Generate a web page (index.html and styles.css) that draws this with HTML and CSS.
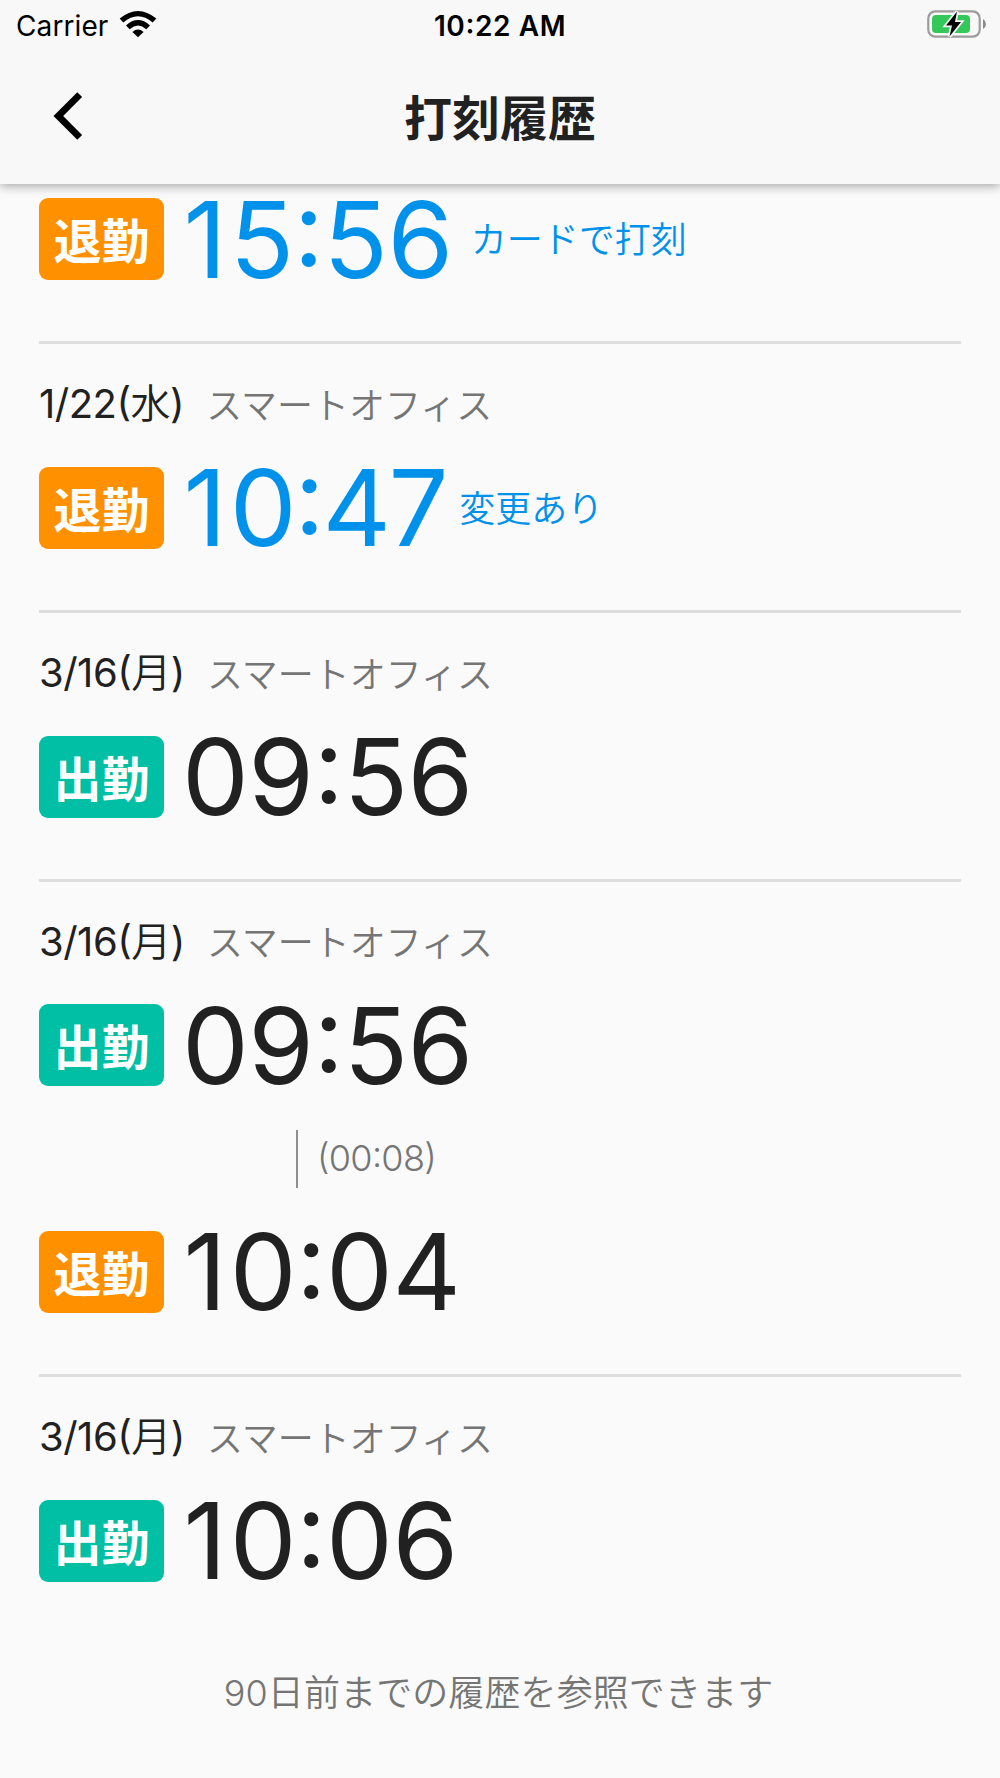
FILE: index.html
```html
<!DOCTYPE html>
<html lang="ja">
<head>
    <meta charset="UTF-8">
    <meta name="viewport" content="width=device-width, initial-scale=1.0">
    <title>打刻履歴</title>
    <link rel="stylesheet" href="styles.css">
</head>
<body>

<header class="header">
    <div class="status-bar">
        <div class="carrier">
            <span class="carrier-name">Carrier</span>
            <svg class="wifi" width="38" height="28" viewBox="0 0 38 28">
                <path d="M0.7 8.6 Q19 -6.600 37.300 8.600 L33.700 12.400 Q19 0 4.300 12.400 Z"/>
                <path d="M7 15.400 Q19 4.800 31 15.400 L27.300 19.200 Q19 12 10.700 19.200 Z"/>
                <path d="M13.400 21.900 Q19 17 24.600 21.900 L19 27.300 Z"/>
            </svg>
        </div>
        <span class="clock">10:22 AM</span>
        <svg class="battery" width="60" height="30" viewBox="0 0 60 30">
            <rect x="1.300" y="2.300" width="51.400" height="25.400" rx="7" fill="none" stroke="#9c9c9c" stroke-width="2.200"/>
            <rect x="5" y="6" width="38" height="18" rx="4" fill="#34c759"/>
            <path d="M56 10 Q59 12 59 15 Q59 18 56 20 Z" fill="#8a8a8a"/>
            <path class="bolt" d="M30 2.500 L19 16.500 H25 L22.500 27.500 L34 13 H28 Z"/>
        </svg>
    </div>
    <div class="nav-bar">
        <svg class="back" width="32" height="48" viewBox="0 0 32 48">
            <path d="M27.700 2.700 L6.300 24 L27.700 45.300"/>
        </svg>
        <h1>打刻履歴</h1>
    </div>
</header>

<main class="history">
    <section class="entry entry-first">
        <div class="punch changed">
            <span class="badge out">退勤</span>
            <span class="time"><span class="one">1</span>5:56</span>
            <span class="note note-card">カードで打刻</span>
        </div>
    </section>

    <section class="entry">
        <div class="info"><span class="date">1/22(<span class="day">水</span>)</span><span class="place">スマートオフィス</span></div>
        <div class="punch changed">
            <span class="badge out">退勤</span>
            <span class="time tight"><span class="one">1</span>0:47</span>
            <span class="note">変更あり</span>
        </div>
    </section>

    <section class="entry">
        <div class="info"><span class="date">3/16(<span class="day">月</span>)</span><span class="place">スマートオフィス</span></div>
        <div class="punch">
            <span class="badge in">出勤</span>
            <span class="time">09:56</span>
        </div>
    </section>

    <section class="entry">
        <div class="info"><span class="date">3/16(<span class="day">月</span>)</span><span class="place">スマートオフィス</span></div>
        <div class="punch">
            <span class="badge in">出勤</span>
            <span class="time">09:56</span>
        </div>
        <div class="duration">(00:08)</div>
        <div class="punch">
            <span class="badge out">退勤</span>
            <span class="time"><span class="one">1</span>0:04</span>
        </div>
    </section>

    <section class="entry">
        <div class="info"><span class="date">3/16(<span class="day">月</span>)</span><span class="place">スマートオフィス</span></div>
        <div class="punch">
            <span class="badge in">出勤</span>
            <span class="time"><span class="one">1</span>0:06</span>
        </div>
    </section>

    <p class="footer-note">90日前までの履歴を参照できます</p>
</main>

</body>
</html>
```
FILE: styles.css
```css
* {
    box-sizing: border-box;
}

body {
    margin: 0;
    height: 1778px;
    overflow: hidden;
    background-color: #fafafa;
    color: #212121;
    font-family: Inter, "Noto Sans CJK JP", sans-serif;
    /* keeps the colon centred between digits */
    font-feature-settings: "calt" 1;
}

.header {
    position: relative;
    height: 184px;
    background-color: #f8f8f8;
    box-shadow: 0 2px 10px rgba(0, 0, 0, 0.35);
}

.status-bar {
    display: grid;
    grid-template-columns: 1fr auto 1fr;
    align-items: center;
    height: 50px;
    padding: 0 13px;
    color: #000;
}

.carrier {
    display: flex;
    align-items: center;
    gap: 11px;
    padding-left: 3px;
}

.carrier-name {
    padding-top: 1px;
    font-size: 28px;
    letter-spacing: 0.1px;
}

.wifi {
    margin-bottom: 3px;
}

.clock {
    padding-top: 1px;
    font-size: 28px;
    font-weight: 600;
    letter-spacing: 0.6px;
}

.battery {
    justify-self: end;
    margin-bottom: 2px;
}

.bolt {
    fill: #000;
    stroke: #f8f8f8;
    stroke-width: 3.5px;
    paint-order: stroke;
}

.nav-bar {
    display: grid;
    grid-template-columns: 1fr auto 1fr;
    align-items: center;
    height: 132px;
    padding: 0 52px;
}

.back {
    fill: none;
    stroke: #000;
    stroke-width: 6.8px;
}

h1 {
    margin: 0;
    padding-top: 5px;
    font-size: 48px;
    line-height: 60px;
    font-weight: 700;
}

.history {
    padding: 0 39px;
}

.entry {
    padding: 30px 0 61.4px;
    border-bottom: 3px solid #dedede;
}

.entry-first {
    padding-top: 14px;
}

.entry:last-of-type {
    border-bottom: none;
}

.info {
    display: flex;
    align-items: center;
    gap: 22px;
    height: 57px;
    margin-bottom: 35.4px;
}

.date {
    margin-bottom: 3px;
    font-size: 40px;
    letter-spacing: -0.5px;
}

.day {
    font-weight: 350;
}

.place {
    font-size: 36px;
    font-weight: 350;
    color: #757575;
}

.punch {
    display: flex;
    align-items: center;
    height: 82px;
}

.badge {
    width: 125px;
    height: 82px;
    padding-top: 3px;
    border-radius: 9px;
    color: #fff;
    font-size: 48px;
    font-weight: 700;
    line-height: 82px;
    text-align: center;
}

.in {
    background-color: #00bfa5;
}

.out {
    background-color: #ff9100;
}

.time {
    margin-left: 18px;
    padding-top: 1px;
    font-size: 106px;
    font-weight: 380;
    line-height: 82px;
    letter-spacing: -0.5px;
}

.one {
    margin-left: 1.5px;
    letter-spacing: 3px;
}

.tight {
    letter-spacing: -2.3px;
}

.changed {
    color: #0091ea;
}

.note {
    margin: 0 0 4px 13px;
    font-size: 36px;
    font-weight: 350;
}

.note-card {
    margin-left: 18px;
}

.duration {
    display: flex;
    align-items: center;
    height: 58px;
    margin: 43.6px 0 42.8px 257px;
    padding: 0 0 1px 19px;
    border-left: 2px solid #8e8e8e;
    color: #757575;
    font-size: 36px;
    font-weight: 350;
    letter-spacing: -0.7px;
}

.footer-note {
    margin: 21px 3px 0 0;
    color: #757575;
    font-size: 36px;
    font-weight: 350;
    letter-spacing: 0.1px;
    text-align: center;
}
```
